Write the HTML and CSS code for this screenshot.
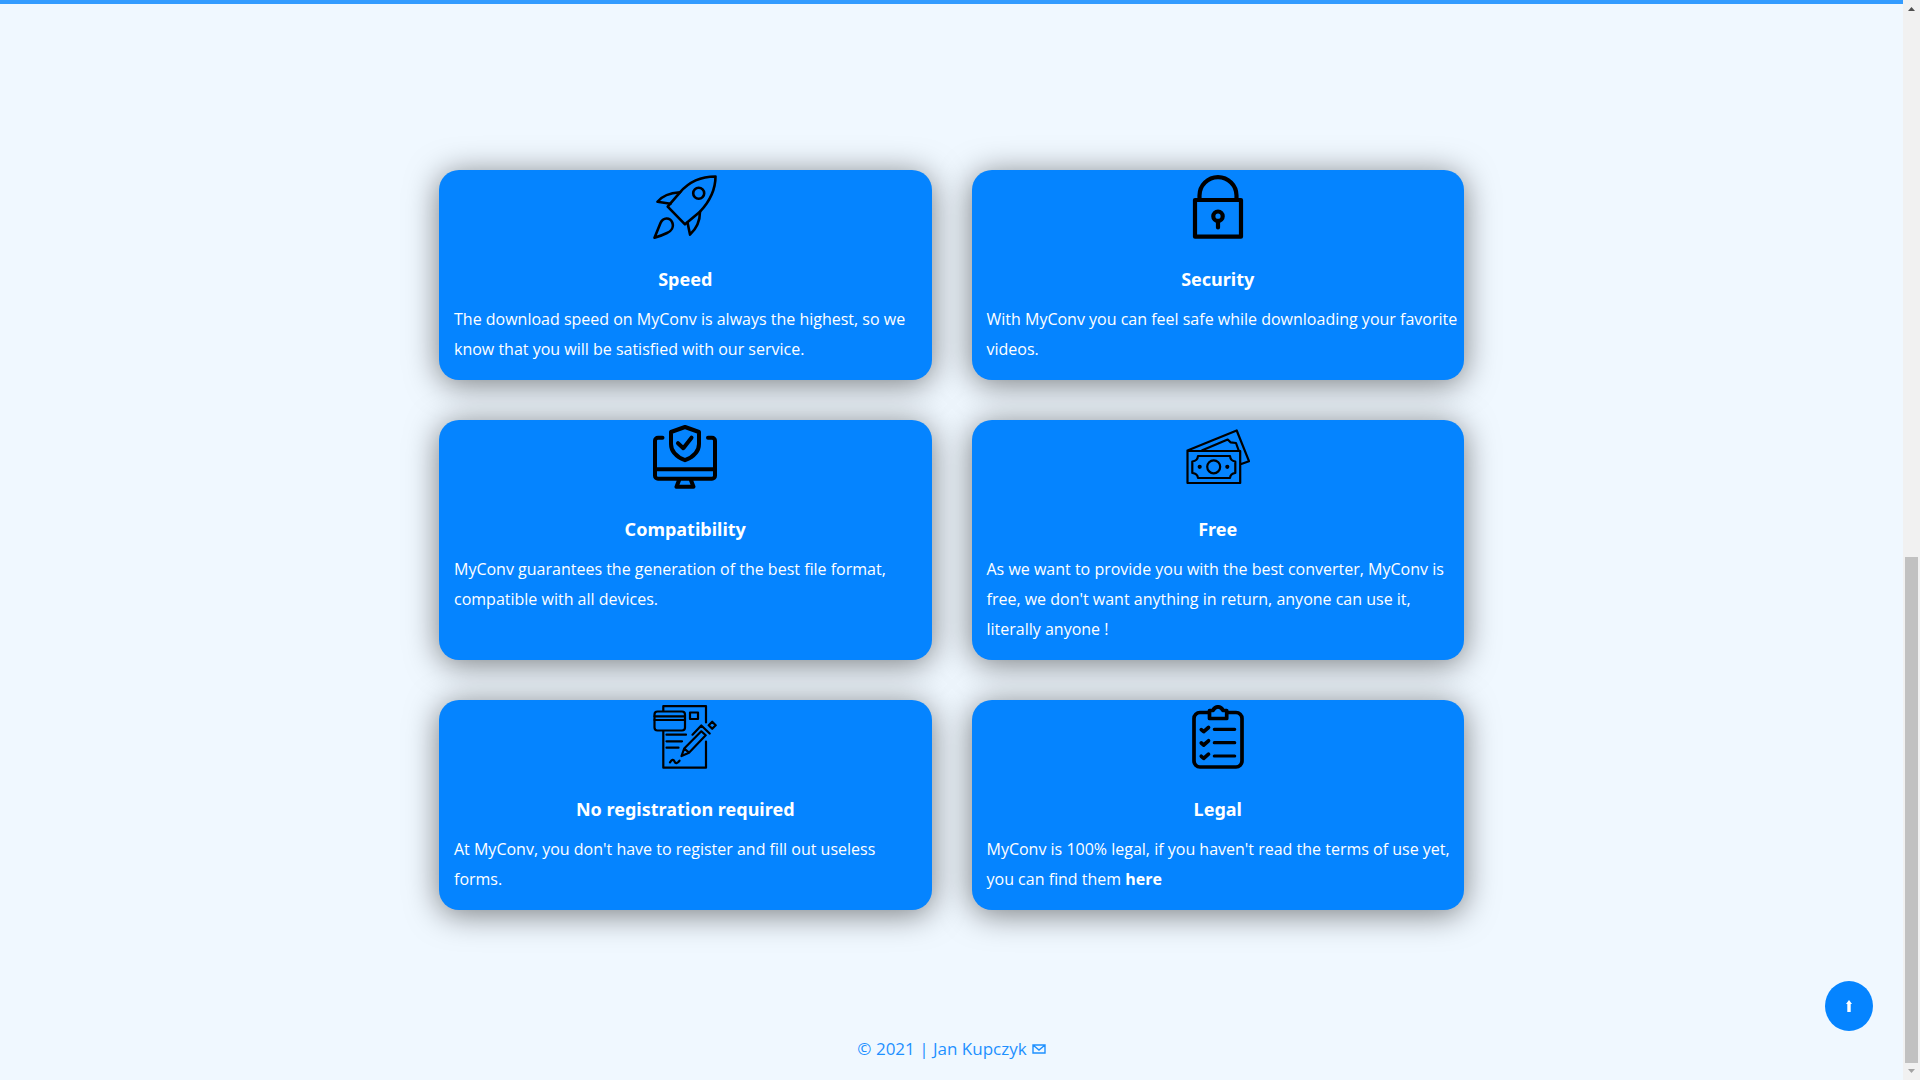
FILE: index.html
```html
<!DOCTYPE html>
<html lang="en">
<head>
<meta charset="utf-8">
<title>MyConv</title>
<link rel="stylesheet" href="styles.css">
</head>
<body>
<div class="page">
  <main class="content">
    <section class="features">
      <article class="card">
        <svg class="icon" viewBox="0 0 64 64" stroke-width="2.6" aria-hidden="true"><path d="M62.5 1.5C47 1.5 35 8 27 17.3L14.7 31.7 32 49.3 47 36.7C57 26 62.5 14 62.5 1.5Z"/><circle cx="45.7" cy="18.3" r="5.5"/><path d="M27 17.3C18 18 9 21 4.5 26.8L17.5 28.7M47 36.7C47 46 43 54 37 59.5L34.5 47.5M1.5 62.7L7.500 48C10 42 17 42 19.300 47.500C21 52 18.500 56 14 58Q9 60.500 1.500 62.700Z"/></svg>
        <h2>Speed</h2>
        <p>The download speed on MyConv is always the highest, so we know that you will be satisfied with our service.</p>
      </article>
      <article class="card">
        <svg class="icon" viewBox="0 0 64 64" stroke-width="4.2" aria-hidden="true"><rect x="9" y="25" width="46" height="36.7"/><path d="M13.5 25V20.6a18.5 18.5 0 0 1 37 0V25M32 46v6.5"/><circle cx="32" cy="41.2" r="4.7"/></svg>
        <h2>Security</h2>
        <p>With MyConv you can feel safe while downloading your favorite videos.</p>
      </article>
      <article class="card">
        <svg class="icon" viewBox="0 0 64 64" stroke-width="4" aria-hidden="true"><path d="M9.5 12.7H5a3 3 0 0 0-3 3V50.7a3 3 0 0 0 3 3H59a3 3 0 0 0 3-3V15.7a3 3 0 0 0-3-3H55M2 44.3H62M26.500 54L23.5 61.8H40.5L37.500 54M32 2L46 7V19C46 27 40 32 32 35.2C24 32 18 27 18 19V7Z"/><path d="M25 18.2L30.3 23.2L38.5 12.7"/></svg>
        <h2>Compatibility</h2>
        <p>MyConv guarantees the generation of the best file format, compatible with all devices.</p>
      </article>
      <article class="card">
        <svg class="icon" viewBox="0 0 64 64" stroke-width="2.2" aria-hidden="true"><path d="M1.5 26H54.2V58H1.5ZM1.5 25.5L50.7 5.5 63 36.2 54.5 39.3M16.3 25.2L41.7 14.5 44.5 17.3 50 18 52.7 25.5"/><path d="M12 31H44Q44.500 36 49.300 36.500V48Q44.500 48.500 44 53H12Q11.500 48.500 6.300 48V36.500Q11.500 36 12 31Z"/><circle cx="27.700" cy="41.800" r="6.500"/><circle cx="13.700" cy="41.800" r="1"/><circle cx="41.300" cy="41.800" r="1"/></svg>
        <h2>Free</h2>
        <p>As we want to provide you with the best converter, MyConv is free, we don't want anything in return, anyone can use it, literally anyone !</p>
      </article>
      <article class="card">
        <svg class="icon" viewBox="0 0 64 64" stroke-width="2.2" aria-hidden="true"><path d="M10.300 6V1.200H53V17.500M53 36.500V62.700H10.300V26"/><rect x="1.500" y="6.500" width="30.500" height="19" rx="3"/><path d="M1.500 11.300H32M1.500 15H32M13.500 29.700H33M13.500 36.300H29M13.500 42.700H25.500M37 7.500H45V14H37ZM28.500 51L31.200 43.500 48.300 26.300 52.700 30.300 36 47.700ZM31.200 43.500L36 47.700M39.500 29.700L48.300 20.500 56.700 28.500M59.200 16.700L62.700 20.300 59.200 23.800 55.700 20.300ZM17 57.300Q20 53 21.500 56.500T26.500 55.700"/></svg>
        <h2>No registration required</h2>
        <p>At MyConv, you don't have to register and fill out useless<br>forms.</p>
      </article>
      <article class="card">
        <svg class="icon" viewBox="0 0 64 64" stroke-width="3.7" aria-hidden="true"><path d="M22 7.500H14a6 6 0 0 0-6 6V56a6 6 0 0 0 6 6H50a6 6 0 0 0 6-6V13.500a6 6 0 0 0-6-6H42M23.500 13.500V5.500H27Q28.500 1.800 32 1.800T37 5.500H40.700V13.500Z"/><path d="M15.300 24.700L17.700 26.700 22.500 22.500M15.300 38L17.700 40 22.500 35.800M15.300 51.300L17.700 53.300 22.500 49.200"/><path stroke-width="3.200" d="M28.300 24.300H48.700M28.300 37.700H48.700M28.300 51H48.700"/></svg>
        <h2>Legal</h2>
        <p>MyConv is 100% legal, if you haven't read the terms of use yet, you can find them <a href="#terms">here</a></p>
      </article>
    </section>
    <footer class="footer">
      <span>© 2021 | Jan Kupczyk</span>
      <a href="#contact" aria-label="Email"><svg class="mail" viewBox="0 0 14 10" aria-hidden="true"><path d="M1 1H13V9H1ZM1 1L7 6 13 1"/></svg></a>
    </footer>
  </main>
  <div class="scrollbar" aria-hidden="true">
    <svg class="scroll-arrow" viewBox="0 0 17 17"><path fill="#505050" d="M5 11L8.500 7 12 11Z"/></svg>
    <div class="track"><div class="thumb"></div></div>
    <svg class="scroll-arrow" viewBox="0 0 17 17"><path fill="#a3a3a3" d="M5 6L8.500 10 12 6Z"/></svg>
  </div>
</div>
<button class="to-top" type="button" aria-label="Back to top"><svg viewBox="0 0 6 12" aria-hidden="true"><path d="M3 0L6 4H4.700V12H1.300V4H0Z"/></svg></button>
</body>
</html>
```
FILE: styles.css
```css
* { box-sizing: border-box; }

body {
  margin: 0;
  background: #f0f8ff;
  color: #fff;
  font-family: "Lucida Sans", "Lucida Grande", "Open Sans", sans-serif;
  font-size: 16px;
  line-height: 30px;
}

.page {
  display: flex;
  min-height: 100vh;
}

.content {
  flex: 1;
  display: flex;
  flex-direction: column;
  justify-content: space-between;
  border-top: 4px solid #339cff;
}

.features {
  display: grid;
  grid-template-columns: 1fr 1fr;
  gap: 40px;
  width: 100%;
  max-width: 1025px;
  margin: 166px auto 0;
}

.card {
  padding: 5px 0 16px;
  border-radius: 20px;
  background: #0584ff;
  box-shadow: 0 4px 32px rgba(0, 0, 0, 0.5);
}

.icon {
  display: block;
  width: 64px;
  height: 64px;
  margin: 0 auto 25px;
  fill: none;
  stroke: #000;
  stroke-linecap: round;
  stroke-linejoin: round;
}

.card h2 {
  margin: 0 0 10px;
  font-family: "Lucida Sans", "Lucida Grande", "Noto Sans", sans-serif;
  font-size: 18px;
  line-height: 30px;
  text-align: center;
}

.card p {
  margin: 0;
  padding: 0 4px 0 15px;
}

.card a {
  color: inherit;
  font-weight: bold;
  text-decoration: none;
}

.footer {
  display: flex;
  align-items: center;
  justify-content: center;
  gap: 5px;
  padding-bottom: 16px;
  color: #1e90ff;
  font-size: 17px;
}

.footer a {
  display: flex;
  color: inherit;
}

.mail {
  width: 14px;
  height: 10px;
  fill: none;
  stroke: currentColor;
  stroke-width: 1.4;
}

.scrollbar {
  display: flex;
  flex-direction: column;
  width: 17px;
  background: #f1f1f1;
}

.scroll-arrow {
  width: 17px;
  height: 17px;
}

.track {
  flex: 1;
  display: flex;
  flex-direction: column;
  justify-content: flex-end;
  padding: 0 2px;
}

.thumb {
  height: 48.4%;
  background: #c1c1c1;
}

.to-top {
  position: fixed;
  right: 47px;
  bottom: 49px;
  display: flex;
  align-items: center;
  justify-content: center;
  width: 48px;
  height: 50px;
  padding: 0;
  border: 0;
  border-radius: 50%;
  background: #0584ff;
}

.to-top svg {
  width: 6px;
  height: 12px;
  fill: #fff;
}
```
